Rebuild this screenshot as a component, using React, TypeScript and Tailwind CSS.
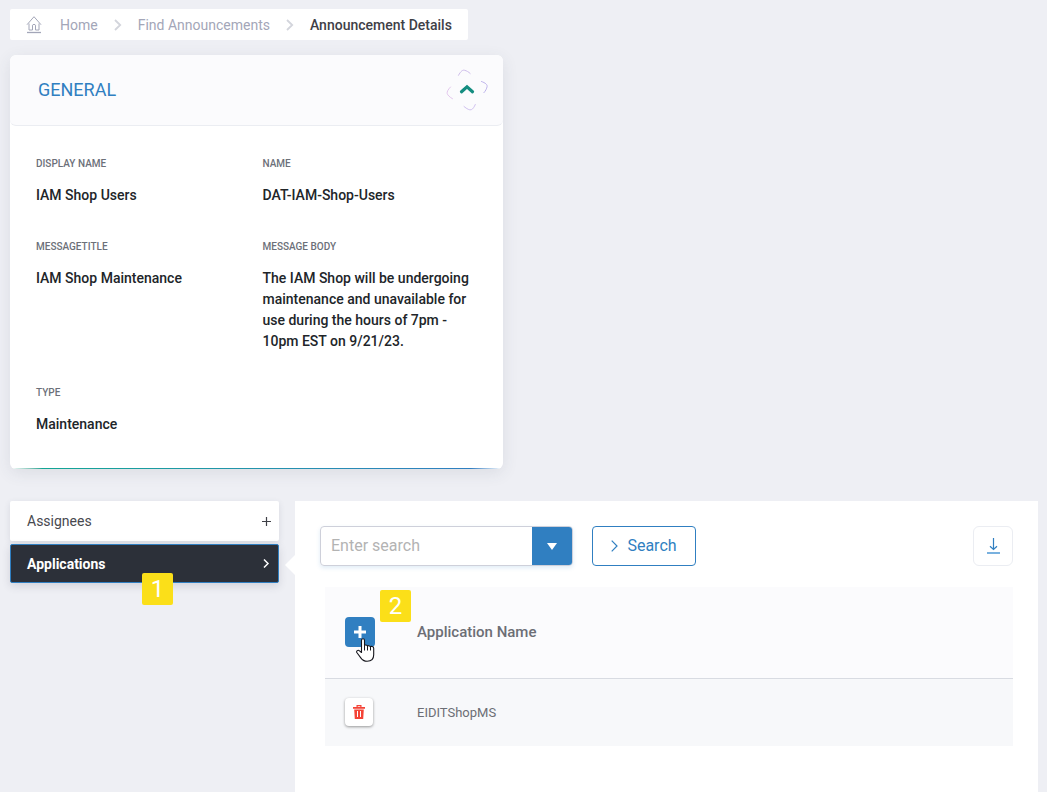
import React, { useState } from 'react';

const details = [
    { label: 'DISPLAY NAME', value: 'IAM Shop Users' },
    { label: 'NAME', value: 'DAT-IAM-Shop-Users' },
    { label: 'MESSAGETITLE', value: 'IAM Shop Maintenance' },
    {
        label: 'MESSAGE BODY',
        value: 'The IAM Shop will be undergoing maintenance and unavailable for use during the hours of 7pm - 10pm EST on 9/21/23.',
    },
    { label: 'TYPE', value: 'Maintenance' },
];

const applications = ['EIDITShopMS'];

function HomeIcon() {
    return (
        <svg className="h-[18px] w-4" viewBox="0 0 16 18" fill="none" stroke="#a3a6b8" aria-hidden="true">
            <path d="M1 8.700 8 .7l7 8M3 7.500v6.500h3.500V9.200c0-1 3-1 3 0V14H13V7.500" />
            <path d="M1 16.500h14" strokeWidth="1.300" />
        </svg>
    );
}

function Separator() {
    return (
        <svg className="h-3 w-2" viewBox="0 0 8 12" fill="none" stroke="#d3d5dc" strokeWidth="1.800" aria-hidden="true">
            <path d="M1 1l5.200 5L1 11" />
        </svg>
    );
}

function ToggleIcon({ open }: { open: boolean }) {
    return (
        <svg className="h-[42px] w-[42px]" viewBox="0 0 42 42" fill="none" strokeLinecap="round" aria-hidden="true">
            <path d="M12.500 6.300c2.300-4.200 4.200-5.700 6.200-5 2 .6 3.800 1.500 5.500 3.200" stroke="#cdbcea" />
            <path d="M35.500 12.500c4 1.400 6 3.200 5.600 5.100-.4 2-1.500 4.300-3.200 6.100" stroke="#bdb2ea" />
            <path d="M4.500 18c-2.600 2.700-3.700 4.800-3.300 6.500.4 1.700 2.600 3.700 5.300 5.200" stroke="#e2c5ec" />
            <path d="M18 37.500c3.200 2.700 5.600 3.800 7.300 3.200 1.700-.7 2.900-2.700 4-5.200" stroke="#cfc0ee" />
            <path d={open ? 'M15.500 22.700l5.500-4.900 5.500 4.900' : 'M15.500 18.500l5.500 4.900 5.500-4.900'} stroke="#148d80" strokeWidth="3.200" />
        </svg>
    );
}

function HandCursor() {
    return (
        <svg className="pointer-events-none absolute top-[21px] left-[11px] h-6 w-[19px]" viewBox="0 0 19 24" aria-hidden="true">
            <path
                d="M5.500 14.500V2.500c0-2.400 3-2.400 3 0v5c.6-.8 2.500-.6 2.900.5.700-.7 2.500-.4 2.900.7.800-.7 3.400-.3 3.400 1.600v6.500c0 4-2.600 6.500-6.600 6.500-3.200 0-4.900-1.300-6.300-3.400L1 14.700c-1.100-1.700.9-3.300 2.500-1.900z"
                fill="#fff"
                stroke="#16161d"
                strokeWidth="1.100"
                strokeLinejoin="round"
            />
            <path d="M8.500 7.500v5M11.500 8v4.500M14.500 9v3.500" stroke="#16161d" />
        </svg>
    );
}

function TrashIcon() {
    return (
        <svg className="h-[14px] w-3" viewBox="0 0 12 14" fill="none" aria-hidden="true">
            <path d="M0 2h12v1.800H0zM3.500 0h5v2H7.300v-.8H4.700V2H3.500zM1.200 4.500h9.600L10.200 14H1.800z" fill="#f44336" />
            <path d="M4.500 6v6M7.500 6v6" stroke="#fff" />
        </svg>
    );
}

const badgeClass =
    'pointer-events-none absolute z-10 flex h-8 w-[31px] items-center justify-center rounded-xs bg-[#fbdf19] text-2xl font-normal text-white';

export default function App() {
    const [open, setOpen] = useState(true);
    const [query, setQuery] = useState('');

    return (
        <div className="flex min-h-screen flex-col bg-[#eeeff4] pt-[9px] pr-[9px] pl-[10px] font-[Roboto,sans-serif] text-[#212529]">
            <nav aria-label="Breadcrumb" className="flex h-[31px] items-center self-start rounded-xs bg-white px-4 text-sm text-[#a3a6b8]">
                <ol className="flex items-center gap-4">
                    <li>
                        <a href="#home" className="flex items-center gap-[18px]">
                            <HomeIcon />
                            Home
                        </a>
                    </li>
                    <li><Separator /></li>
                    <li><a href="#announcements">Find Announcements</a></li>
                    <li><Separator /></li>
                    <li className="font-medium text-[#3f4047]" aria-current="page">Announcement Details</li>
                </ol>
            </nav>

            <section className="mt-[15px] w-full max-w-[493px] overflow-hidden rounded-md bg-white shadow-[0_4px_16px_rgba(60,65,90,0.1)]">
                <header className="flex h-[71px] items-center justify-between rounded-md border-b border-[#ebedf2] bg-[#fbfbfd] pr-[15px] pl-7">
                    <h2 className="text-lg text-[#307fc1]">GENERAL</h2>
                    <button type="button" aria-label="Toggle general" aria-expanded={open} onClick={() => setOpen(!open)}>
                        <ToggleIcon open={open} />
                    </button>
                </header>
                {open && (
                    <dl className="grid grid-cols-2 gap-x-3 gap-y-[33px] px-[26px] pt-[30px] pb-[33px]">
                        {details.map((item) => (
                            <div key={item.label}>
                                <dt className="text-[10px] leading-4 font-medium text-[#6c7079]">{item.label}</dt>
                                <dd className="mt-[13px] text-sm leading-[21px] font-medium">{item.value}</dd>
                            </div>
                        ))}
                    </dl>
                )}
                <div className="flex h-px">
                    <div className="w-8 bg-linear-to-r from-white to-[#12a594]" />
                    <div className="flex-1 bg-linear-to-r from-[#12a594] to-[#307fc1]" />
                    <div className="w-8 bg-linear-to-r from-[#307fc1] to-white" />
                </div>
            </section>

            <div className="mt-8 flex flex-1 gap-4">
                <nav aria-label="Announcement sections" className="flex w-[269px] shrink-0 flex-col gap-[3px] self-start text-sm">
                    <a href="#assignees" className="flex h-10 items-center justify-between rounded-xs bg-white pr-2 pl-[17px] text-[#48494f] shadow-[0_2px_6px_rgba(60,65,90,0.12)]">
                        Assignees
                        <svg className="h-[9px] w-[9px]" viewBox="0 0 9 9" stroke="#3f4047" strokeWidth="1.200" aria-hidden="true">
                            <path d="M4.500 0v9M0 4.500h9" />
                        </svg>
                    </a>
                    <a href="#applications" aria-current="true" className="relative flex h-[39px] items-center justify-between rounded-xs border border-[#307fc1] bg-[#2c3039] pr-2 pl-4 font-bold text-white shadow-[0_3px_8px_rgba(60,65,90,0.16)]">
                        Applications
                        <svg className="h-[9px] w-[7px]" viewBox="0 0 7 9" fill="none" stroke="#fff" strokeWidth="1.500" aria-hidden="true">
                            <path d="M1 .5l4 4-4 4" />
                        </svg>
                        <span className={`${badgeClass} top-7 left-[131px]`}>1</span>
                        <svg className="absolute top-[10px] -right-[17px] h-5 w-[10px]" viewBox="0 0 10 20" fill="#fff" aria-hidden="true">
                            <path d="M10 0v20L0 10z" />
                        </svg>
                    </a>
                </nav>

                <main className="min-w-0 flex-1 bg-white px-[25px] pt-[25px]">
                    <div className="flex items-center justify-between">
                        <form className="flex items-center gap-[19px]" onSubmit={(e) => e.preventDefault()}>
                            <div className="flex h-10 w-[253px] overflow-hidden rounded border border-[#ced0da] shadow-[0_2px_4px_rgba(48,127,193,0.15)]">
                                <input
                                    type="text"
                                    aria-label="Enter search"
                                    placeholder="Enter search"
                                    value={query}
                                    onChange={(e) => setQuery(e.target.value)}
                                    className="min-w-0 flex-1 px-[10px] text-base outline-none placeholder:text-[#b3b3b3]"
                                />
                                <button type="button" aria-label="Search options" className="flex w-10 items-center justify-center bg-[#307fc1]">
                                    <svg className="h-[7px] w-[10px]" viewBox="0 0 10 7" fill="#fff" aria-hidden="true">
                                        <path d="M0 0h10L5 7z" />
                                    </svg>
                                </button>
                            </div>
                            <button type="submit" className="flex h-10 w-[104px] items-center justify-center gap-[9px] rounded border border-[#307fc1] text-base text-[#307fc1]">
                                <svg className="h-3 w-[7px]" viewBox="0 0 7 12" fill="none" stroke="#307fc1" strokeWidth="1.200" aria-hidden="true">
                                    <path d="M.7.7L6 6 .7 11.300" />
                                </svg>
                                Search
                            </button>
                        </form>
                        <button type="button" aria-label="Download" className="flex h-10 w-10 items-center justify-center rounded-md border border-[#ebedf2]">
                            <svg className="h-4 w-[13px]" viewBox="0 0 13 16" fill="none" stroke="#307fc1" strokeWidth="1.200" aria-hidden="true">
                                <path d="M6.500 0v11.500M3 8.200l3.500 3.300L10 8.200" />
                                <path d="M0 15h13" stroke="#4d97d4" strokeWidth="1.500" />
                            </svg>
                        </button>
                    </div>

                    <div className="mt-[21px] pl-[5px]">
                        <table className="w-full table-fixed text-left">
                            <thead>
                                <tr className="h-[91px] border-b border-[#d8dbe2] bg-[#fbfbfd]">
                                    <th className="w-[92px] pl-5">
                                        <div className="relative">
                                            <button type="button" aria-label="Add application" className="flex h-[30px] w-[30px] items-center justify-center rounded bg-[#307fc1]">
                                                <svg className="h-3 w-3" viewBox="0 0 12 12" stroke="#fff" strokeWidth="3" aria-hidden="true">
                                                    <path d="M6 0v12M0 6h12" />
                                                </svg>
                                            </button>
                                            <HandCursor />
                                            <span className={`${badgeClass} -top-[27px] left-[35px]`}>2</span>
                                        </div>
                                    </th>
                                    <th className="text-[15px] font-medium text-[#6c6e75]">Application Name</th>
                                </tr>
                            </thead>
                            <tbody>
                                {applications.map((name) => (
                                    <tr key={name} className="h-[68px] bg-[#f7f8fa]">
                                        <td className="pl-5">
                                            <button type="button" aria-label={`Remove ${name}`} className="flex h-7 w-7 items-center justify-center rounded bg-white shadow-[0_1px_3px_rgba(0,0,0,0.4)]">
                                                <TrashIcon />
                                            </button>
                                        </td>
                                        <td className="text-[13px] text-[#6c6e75]">{name}</td>
                                    </tr>
                                ))}
                            </tbody>
                        </table>
                    </div>
                </main>
            </div>
        </div>
    );
}
